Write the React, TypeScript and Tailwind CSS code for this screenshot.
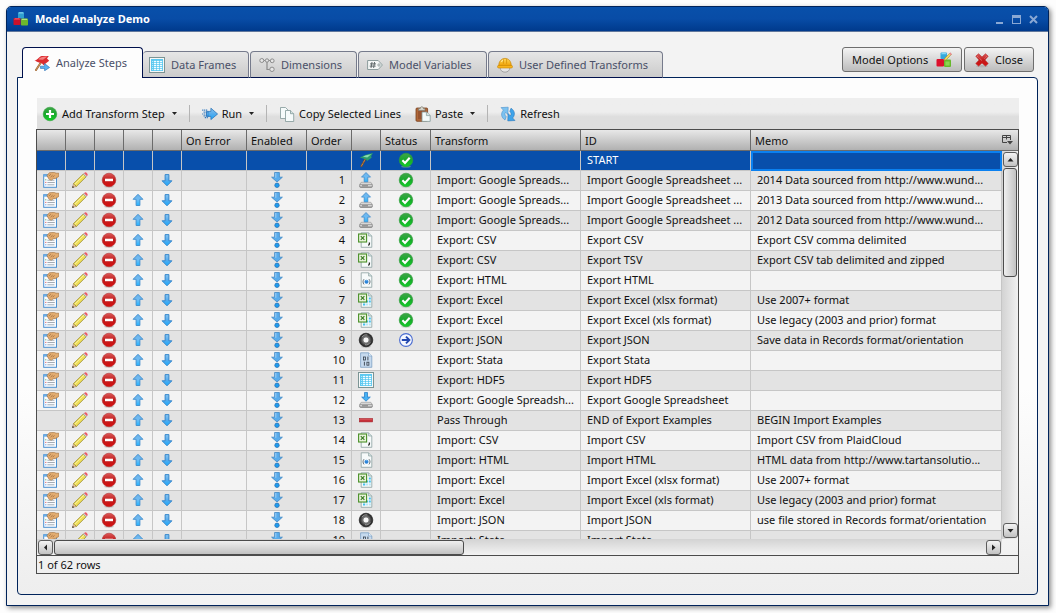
import type { ReactNode } from "react";

type IconProps = { className?: string };

function Svg({ children, className = "" }: IconProps & { children: ReactNode }) {
  return (
    <svg viewBox="0 0 16 16" aria-hidden="true" className={"block size-4 shrink-0 " + className}>
      {children}
    </svg>
  );
}

function Gradients() {
  return (
    <svg width="0" height="0" className="absolute" aria-hidden="true">
      <defs>
        <linearGradient id="gBlue" x1="0" y1="0" x2="0" y2="1">
          <stop offset="0" stopColor="#8ac6f2" />
          <stop offset="0.5" stopColor="#55abec" />
          <stop offset="1" stopColor="#18aaff" />
        </linearGradient>
        <linearGradient id="gBlueUp" x1="0" y1="0" x2="0" y2="1">
          <stop offset="0" stopColor="#6cb2ea" />
          <stop offset="0.5" stopColor="#6fbcf3" />
          <stop offset="1" stopColor="#22b4ff" />
        </linearGradient>
        <linearGradient id="gGreen" x1="0" y1="0" x2="0" y2="1">
          <stop offset="0" stopColor="#3fa548" />
          <stop offset="0.5" stopColor="#18a92c" />
          <stop offset="1" stopColor="#12d026" />
        </linearGradient>
        <linearGradient id="gRed" x1="0" y1="0" x2="0" y2="1">
          <stop offset="0" stopColor="#dd5a5a" />
          <stop offset="0.5" stopColor="#c01c1c" />
          <stop offset="1" stopColor="#d80f0f" />
        </linearGradient>
        <linearGradient id="gGray" x1="0" y1="0" x2="0" y2="1">
          <stop offset="0" stopColor="#f4f4f4" />
          <stop offset="1" stopColor="#9b9b9b" />
        </linearGradient>
        <linearGradient id="gHat" x1="0" y1="0" x2="0" y2="1">
          <stop offset="0" stopColor="#ffd75a" />
          <stop offset="1" stopColor="#f0a000" />
        </linearGradient>
        <radialGradient id="gRing">
          <stop offset="0.3" stopColor="#fff" />
          <stop offset="0.4" stopColor="#888" />
          <stop offset="0.7" stopColor="#4a4a4a" />
          <stop offset="1" stopColor="#1c1c1c" />
        </radialGradient>
      </defs>
    </svg>
  );
}

const CubesIcon = () => (
  <Svg>
    <rect x="5" y="1" width="6" height="6.5" rx="0.8" fill="#2f9fd0" />
    <path d="M5.4 2.6L6.3 1.2h3.6l.8 1.4z" fill="#7fd0ee" />
    <rect x="0.5" y="7" width="7" height="7" rx="0.8" fill="#c8102a" />
    <path d="M.9 8.6L2 7.2h4.2l.9 1.4z" fill="#ef5c6c" />
    <rect x="8" y="7.5" width="7" height="7" rx="0.8" fill="#6cb82e" />
    <path d="M8.4 9.1l1-1.4h4.3l.9 1.4z" fill="#b0e27c" />
  </Svg>
);

const CubesPencilIcon = () => (
  <Svg>
    <rect x="4.5" y="0.5" width="6.5" height="6.5" rx="1" fill="#35a8dc" />
    <path d="M5 2.2l1-1.4h3.6l1 1.4z" fill="#84d6f4" />
    <rect x="0.5" y="7" width="7.5" height="7.5" rx="1" fill="#dd0f2c" />
    <rect x="8" y="7.5" width="7" height="7.5" rx="1" fill="#67b82c" />
    <rect x="9.4" y="9.5" width="4.2" height="4" fill="#8cd450" />
    <path d="M8 8.6l.9-2.5L14 .9l1.5 1.4-5.1 5.4z" fill="#f1dc62" stroke="#8a7a28" strokeWidth=".5" />
    <path d="M13.2 1.7L14.3.6l1.5 1.4-1.1 1.2z" fill="#ee8a94" />
  </Svg>
);

const RedFlagIcon = () => (
  <Svg>
    <path d="M8.8 4.5L2 15" stroke="#9c6230" strokeWidth="2" strokeLinecap="round" />
    <path d="M8.8 4.5L2 15" stroke="#dba368" strokeWidth=".8" strokeLinecap="round" />
    <path d="M.5 5.2C3 5.8 4 2.6 7.5 1L14.8.9 13 3.4l2.2 2.4-5.8 4.5C8.8 7.3 4.6 8.2.5 5.2z" fill="#dc2c30" />
    <path d="M4.5 4.5C6 2.5 8 1.7 13.4 1.6L9 4.8z" fill="#f28080" />
    <path d="M6.4 11.2h4.2V8.6l5 3.9-5 3.3v-2.4H6.4z" fill="#5ab0f0" stroke="#2468b0" strokeWidth=".6" />
  </Svg>
);

const GreenFlagIcon = () => (
  <Svg className="mx-auto">
    <path d="M8.5 5L3 14.8" stroke="#7c4a20" strokeWidth="1.8" />
    <path d="M8.5 5L3 14.8" stroke="#e0b078" strokeWidth=".8" strokeDasharray="1 .6" />
    <path d="M1.4 5.2C4.5 5 5.4 3 9 2.4l5.9-1.3-1.7 3 .4 1.6-4.5 3.4C8.6 6.6 5 6.9 1.4 5.2z" fill="#2c9c6c" />
    <path d="M5 4.8c2-1.4 3.5-1.7 8.5-2.8L9.3 5.6z" fill="#8adcb0" />
  </Svg>
);

const TableIcon = ({ className }: IconProps) => (
  <Svg className={className}>
    <rect x="0.5" y="0.5" width="15" height="15" fill="#f6f8f8" stroke="#7c9494" />
    <rect x="2" y="2" width="12" height="12" fill="#5cc8f0" />
    <path d="M5 4h2v1H5zM8 4h2v1H8zM11 4h2v1h-2zM5 6h2v1H5zM8 6h2v1H8zM11 6h2v1h-2zM5 8h2v1H5zM8 8h2v1H8zM11 8h2v1h-2zM5 10h2v1H5zM8 10h2v1H8zM11 10h2v1h-2zM5 12h2v1H5zM8 12h2v1H8zM11 12h2v1h-2z" fill="#f2fcff" stroke="#f2fcff" strokeWidth=".3" />
    <path d="M3 4h1v1H3zM3 6h1v1H3zM3 8h1v1H3zM3 10h1v1H3zM3 12h1v1H3z" fill="#b4e8fa" />
  </Svg>
);

const DimensionsIcon = () => (
  <Svg>
    <path d="M4.5 3.5H12M8 3.5v9h4" stroke="#8c8c8c" strokeWidth="1.2" fill="none" />
    <circle cx="2.8" cy="3.5" r="2" fill="#e6e6e6" stroke="#8c8c8c" />
    <circle cx="8" cy="3.5" r="1.7" fill="#e6e6e6" stroke="#8c8c8c" />
    <circle cx="13.2" cy="3.8" r="1.9" fill="#e6e6e6" stroke="#8c8c8c" />
    <circle cx="13" cy="12.3" r="2.2" fill="#e6e6e6" stroke="#8c8c8c" />
  </Svg>
);

const TagIcon = () => (
  <Svg>
    <path d="M.6 3.5h10.6L15.4 8l-4.2 4.5H.6z" fill="#f4f7f6" stroke="#8c9c9c" />
    <path d="M5 5l-1 6M7.6 5l-1 6M3 6.9h6M2.7 9.1h6" stroke="#555f60" strokeWidth=".9" />
    <circle cx="12" cy="8" r="1.2" fill="#e3e3e3" stroke="#8c9c9c" strokeWidth=".8" />
  </Svg>
);

const HardHatIcon = () => (
  <Svg>
    <path d="M3 10c0 3.4 2.3 5.2 5 5.2s5-1.8 5-5.2" fill="#e4e4e4" stroke="#a3a3a3" />
    <path d="M1.8 9C1.6 4.6 4.2 1.4 8 1.4S14.4 4.6 14.2 9z" fill="url(#gHat)" stroke="#c88400" strokeWidth=".7" />
    <path d="M6.4 1.8v5M9.6 1.8v5" stroke="#d08c00" strokeWidth=".7" />
    <rect x="0.5" y="8.4" width="15" height="2.6" rx="1.2" fill="#f8b41c" stroke="#c88400" strokeWidth=".6" />
    <path d="M4.5 5c.4-1 1-1.7 1.7-2.1" stroke="#fff3bd" strokeWidth=".9" fill="none" />
  </Svg>
);

const CloseXIcon = () => (
  <Svg>
    <ellipse cx="8" cy="14.2" rx="6" ry="1.2" fill="#b3b3b3" />
    <path d="M1.8 4.2L4.6 1.8 8 5.1l3.5-3.3 2.7 2.4L10.9 8l3.3 3.6-2.7 2.5L8 10.9l-3.4 3.2-2.8-2.5L5.1 8z" fill="url(#gRed)" stroke="#b42020" strokeWidth=".6" />
    <path d="M3.4 4.4L8 8.6M12.6 4.4L10 7" stroke="#f0a0a0" strokeWidth=".8" strokeDasharray="1 .8" />
  </Svg>
);

const AddIcon = () => (
  <Svg>
    <circle cx="8" cy="8" r="6.8" fill="url(#gGreen)" stroke="#31a03c" strokeWidth=".6" />
    <path d="M8 4v8M4 8h8" stroke="#fff" strokeWidth="2.2" />
  </Svg>
);

const RunIcon = () => (
  <Svg>
    <path d="M4.5 5.4h4.4V2.2L15.6 8l-6.7 5.6v-3.2H4.5z" fill="url(#gBlue)" stroke="#2c74b8" strokeWidth=".8" />
    <path d="M.2 4.2h5M1.6 6.1h5M.2 8h6.4M1.6 9.9h5M2.8 11.6h3" stroke="#2c76bc" strokeWidth="1.2" strokeDasharray="1.2 .7" />
  </Svg>
);

const CopyIcon = () => (
  <Svg>
    <path d="M1.5 1.5h5l3 3v8h-8z" fill="#f5fafa" stroke="#829898" strokeWidth=".8" />
    <path d="M6.5 4.5h5l3.2 3.2v7.8H6.5z" fill="#f5fafa" stroke="#829898" strokeWidth=".8" />
    <path d="M11.5 4.5v3.2h3.2" fill="#d7e6e4" stroke="#829898" strokeWidth=".8" />
  </Svg>
);

const PasteIcon = () => (
  <Svg>
    <rect x="1" y="2" width="11.6" height="13.3" rx="1" fill="#b0683a" stroke="#7a3f1c" strokeWidth=".8" />
    <rect x="3" y="4.5" width="7.6" height="8.6" fill="#985430" />
    <path d="M3.6 4.4V2.6h1.6C5.2.2 8.4.2 8.4 2.6H10v1.8z" fill="#d8d8d0" stroke="#77776c" strokeWidth=".7" />
    <path d="M7 6h4.4l3.8 3.4v6H7z" fill="#f3fafa" stroke="#829898" strokeWidth=".8" />
    <path d="M11.4 6v3.6h3.8" fill="#d3e2e0" stroke="#829898" strokeWidth=".7" />
  </Svg>
);

const RefreshIcon = () => (
  <Svg>
    <path d="M1 1.6l7.2-.4-.3 7.4-2.2-2.3c-1.2 1.2-1 3 .5 4.4L5 14C.9 11.4.7 7 3.4 4.1z" fill="#7cc2f0" stroke="#4a90cc" strokeWidth=".6" />
    <path d="M15 14.5l-7.2.4.3-7.4 2.2 2.3c1.2-1.2 1-3-.5-4.4L11 2.2c4.1 2.6 4.3 6.9 1.6 9.8z" fill="#3fa4ea" stroke="#2c78bc" strokeWidth=".6" />
  </Svg>
);

const PropertiesIcon = () => (
  <Svg className="mx-auto">
    <rect x="0.7" y="2.7" width="12.8" height="12.6" fill="#fafcff" stroke="#4a90d0" />
    <path d="M.7 2.7h8v2h-8z" fill="#6ab0ea" />
    <path d="M4.4 8.2h7M4.4 10.5h7.4M4.4 12.8h7" stroke="#9aa4ae" strokeWidth=".9" />
    <path d="M2.3 7.8h1" stroke="#46b446" />
    <path d="M2.3 10.4h1" stroke="#d44" />
    <path d="M2.3 12.8h1" stroke="#4680e0" />
    <path d="M4 3.6L6.4.7l5-.3 1.6.8h2.8V4.4l-3.5 2.3-1.6-.3-2.2 1.7-1.6-.3-1.4-1.4z" fill="#e2ac70" stroke="#a06c38" strokeWidth=".6" />
    <path d="M6.2 3.8l1.6-1.5M7.6 5.1l2-1.9M9.6 5.2l1.8-1.8" stroke="#9a6030" strokeWidth=".7" />
  </Svg>
);

const PencilIcon = () => (
  <Svg className="mx-auto">
    <path d="M.3 15.7l1.2-4.1 2.9 2.8z" fill="#e9c79a" stroke="#806040" strokeWidth=".4" />
    <path d="M.2 15.8l.6-1.9 1.3 1.3z" fill="#111" />
    <path d="M1.5 11.6L11.3 2l2.8 2.8-9.7 9.6z" fill="#f0e05a" stroke="#8c7c20" strokeWidth=".7" />
    <path d="M2.7 12.2l9.6-9.4" stroke="#fbf6b0" strokeWidth=".8" />
    <path d="M11.3 2l.8-.8 2.8 2.8-.8.8z" fill="#d5dbe0" stroke="#8a929a" strokeWidth=".4" />
    <path d="M12.1 1.2c1-1.3 2-1 2.9 0s1 1.9-.1 2.8z" fill="#ee5a68" />
  </Svg>
);

const RemoveIcon = () => (
  <Svg className="mx-auto">
    <ellipse cx="8" cy="14.8" rx="5" ry=".8" fill="#bdbdbd" />
    <circle cx="8" cy="8" r="6.8" fill="url(#gRed)" stroke="#b03030" strokeWidth=".6" />
    <rect x="4" y="6.7" width="8" height="2.5" fill="#fff" />
  </Svg>
);

const UpIcon = () => (
  <Svg className="mx-auto">
    <path d="M8 2.3l4.9 5H9.9v6.2H6.1V7.3h-3z" fill="url(#gBlueUp)" stroke="#3f8ccc" strokeWidth=".9" />
  </Svg>
);

const DownIcon = () => (
  <Svg className="mx-auto">
    <path d="M8 13.8l-4.9-5h3V2.6h3.8v6.2h3z" fill="url(#gBlue)" stroke="#2c80c8" strokeWidth=".9" />
  </Svg>
);

const EnabledIcon = () => (
  <Svg className="mx-auto">
    <path d="M8 10L2.6 5.2h3V.5h4.8v4.7h3z" fill="#58acec" stroke="#4088c4" strokeWidth=".8" />
    <path d="M6.8 1v4.8" stroke="#a4d4f8" strokeWidth=".9" />
    <circle cx="8" cy="13.3" r="2.2" fill="#1c9cf0" stroke="#2c74b4" strokeWidth=".8" />
  </Svg>
);

const OkIcon = () => (
  <Svg className="mx-auto">
    <ellipse cx="8" cy="14.8" rx="5" ry=".8" fill="#9fbf9f" opacity=".6" />
    <circle cx="8" cy="8" r="6.8" fill="url(#gGreen)" stroke="#2f9a3a" strokeWidth=".6" />
    <path d="M4.4 8.2l2.6 2.7 4.7-5.1" stroke="#fff" strokeWidth="2.1" fill="none" />
  </Svg>
);

const RunningIcon = () => (
  <Svg className="mx-auto">
    <circle cx="8" cy="8" r="6.4" fill="#f6f8ff" stroke="#4a6cd0" strokeWidth="1.1" />
    <path d="M3.8 8h6.4M8 4.6L11.4 8 8 11.4" stroke="#2448b0" strokeWidth="1.9" fill="none" />
  </Svg>
);

const Drive = () => (
  <>
    <path d="M3.2 10.3h9.6l1.6 2.3H1.6z" fill="#e8e8e8" stroke="#8a8a8a" strokeWidth=".6" />
    <rect x="1.6" y="12.3" width="12.8" height="3.1" rx="1.2" fill="url(#gGray)" stroke="#777" strokeWidth=".7" />
    <path d="M4 13.8h6" stroke="#666" strokeWidth=".8" />
  </>
);

const UploadIcon = () => (
  <Svg className="mx-auto">
    <Drive />
    <path d="M8 .5l4.5 4.6H9.8v4.7H6.2V5.1H3.5z" fill="url(#gBlueUp)" stroke="#3f8ccc" strokeWidth=".8" />
  </Svg>
);

const DownloadIcon = () => (
  <Svg className="mx-auto">
    <Drive />
    <path d="M8 9.2L3.7 5.1h2.8V.5h3v4.6h2.8z" fill="#46b2f4" stroke="#2c80c8" strokeWidth=".8" />
  </Svg>
);

const Page = () => (
  <>
    <path d="M3.2.8h7.4l3.2 3.2v11.3H3.2z" fill="#f6fafa" stroke="#8aa0a0" strokeWidth=".8" />
    <path d="M10.6.8V4h3.2" fill="#d5e4e2" stroke="#8aa0a0" strokeWidth=".7" />
  </>
);

const ExcelBadge = () => (
  <>
    <rect x=".6" y="2" width="8" height="8" fill="#eaf4dc" stroke="#4a9028" strokeWidth="1.1" />
    <path d="M2.8 4.1l3.6 3.8M6.4 4.1L2.8 7.9" stroke="#3c7c28" strokeWidth="1.2" />
  </>
);

const CsvIcon = () => (
  <Svg className="mx-auto">
    <Page />
    <ExcelBadge />
    <path d="M11.4 10.4v1.3c0 .8-.4 1.3-1.1 1.6" stroke="#222" strokeWidth="1.3" fill="none" />
  </Svg>
);

const ExcelIcon = () => (
  <Svg className="mx-auto">
    <Page />
    <path d="M5 8.4h2.2v2H5zM8 8.4h2v2H8zM5 11.4h2.2v2H5zM10.8 8.4h2v2h-2zM10.8 5.4h2v2h-2z" fill="#48c0ee" />
    <path d="M8 11.4h2v2H8zM10.8 11.4h2v2h-2z" fill="#b8e6f6" />
    <ExcelBadge />
  </Svg>
);

const HtmlIcon = () => (
  <Svg className="mx-auto">
    <Page />
    <path d="M6 7.2c-1.3 1.6-1.3 3.6 0 5.2M11 7.2c1.3 1.6 1.3 3.6 0 5.2" stroke="#555f66" strokeWidth=".9" fill="none" />
    <circle cx="8.5" cy="9.8" r="2" fill="#2c84d8" />
    <path d="M7.6 9c.4-.8 1.3-.9 1.8-.4" stroke="#a9d8ff" strokeWidth=".6" fill="none" />
  </Svg>
);

const JsonIcon = () => (
  <Svg className="mx-auto">
    <ellipse cx="8" cy="14.8" rx="5" ry=".8" fill="#b5b5b5" />
    <circle cx="8" cy="8" r="6.8" fill="url(#gRing)" stroke="#222" strokeWidth=".7" />
    <path d="M4 5.2c1.3-2 3.2-2.8 5.4-2.2M12.2 10.4c-1.3 2-3 2.8-5.2 2.3" stroke="#a0a0a0" strokeWidth=".9" fill="none" />
    <circle cx="8" cy="8" r="2.3" fill="#f7f7f7" />
  </Svg>
);

const BinaryIcon = () => (
  <Svg className="mx-auto">
    <path d="M2.6.8h8l3.2 3.2v11.3H2.6z" fill="#c6daee" stroke="#7ca0c4" strokeWidth=".8" />
    <path d="M10.6.8V4h3.2" fill="#edf5fc" stroke="#7ca0c4" strokeWidth=".7" />
    <rect x="5.4" y="5" width="2" height="3" fill="none" stroke="#333d48" strokeWidth=".8" />
    <path d="M9.9 4.6v3.8M6.4 9.8v3.8" stroke="#333d48" strokeWidth=".9" />
    <rect x="8.9" y="10.2" width="2" height="3" fill="none" stroke="#333d48" strokeWidth=".8" />
  </Svg>
);

const BarIcon = () => (
  <Svg className="mx-auto">
    <rect x="1.4" y="6.5" width="13.2" height="3.4" fill="#c83038" stroke="#a02028" strokeWidth=".6" />
    <path d="M1.8 7.2h12.4" stroke="#e27a7e" strokeWidth=".6" />
  </Svg>
);

const CenteredTableIcon = () => <TableIcon className="mx-auto" />;

type Kind = "upload" | "download" | "csv" | "html" | "excel" | "json" | "binary" | "table" | "bar";

const kindIcons: Record<Kind, () => ReactNode> = {
  upload: UploadIcon,
  download: DownloadIcon,
  csv: CsvIcon,
  html: HtmlIcon,
  excel: ExcelIcon,
  json: JsonIcon,
  binary: BinaryIcon,
  table: CenteredTableIcon,
  bar: BarIcon,
};

type Step = {
  order: number;
  kind: Kind;
  status?: "ok" | "running";
  transform: string;
  id: string;
  memo?: string;
};

const steps: Step[] = [
  { order: 1, kind: "upload", status: "ok", transform: "Import: Google Spreads...", id: "Import Google Spreadsheet ...", memo: "2014 Data sourced from http://www.wund..." },
  { order: 2, kind: "upload", status: "ok", transform: "Import: Google Spreads...", id: "Import Google Spreadsheet ...", memo: "2013 Data sourced from http://www.wund..." },
  { order: 3, kind: "upload", status: "ok", transform: "Import: Google Spreads...", id: "Import Google Spreadsheet ...", memo: "2012 Data sourced from http://www.wund..." },
  { order: 4, kind: "csv", status: "ok", transform: "Export: CSV", id: "Export CSV", memo: "Export CSV comma delimited" },
  { order: 5, kind: "csv", status: "ok", transform: "Export: CSV", id: "Export TSV", memo: "Export CSV tab delimited and zipped" },
  { order: 6, kind: "html", status: "ok", transform: "Export: HTML", id: "Export HTML" },
  { order: 7, kind: "excel", status: "ok", transform: "Export: Excel", id: "Export Excel (xlsx format)", memo: "Use 2007+ format" },
  { order: 8, kind: "excel", status: "ok", transform: "Export: Excel", id: "Export Excel (xls format)", memo: "Use legacy (2003 and prior) format" },
  { order: 9, kind: "json", status: "running", transform: "Export: JSON", id: "Export JSON", memo: "Save data in Records format/orientation" },
  { order: 10, kind: "binary", transform: "Export: Stata", id: "Export Stata" },
  { order: 11, kind: "table", transform: "Export: HDF5", id: "Export HDF5" },
  { order: 12, kind: "download", transform: "Export: Google Spreadsh...", id: "Export Google Spreadsheet" },
  { order: 13, kind: "bar", transform: "Pass Through", id: "END of Export Examples", memo: "BEGIN Import Examples" },
  { order: 14, kind: "csv", transform: "Import: CSV", id: "Import CSV", memo: "Import CSV from PlaidCloud" },
  { order: 15, kind: "html", transform: "Import: HTML", id: "Import HTML", memo: "HTML data from http://www.tartansolutio..." },
  { order: 16, kind: "excel", transform: "Import: Excel", id: "Import Excel (xlsx format)", memo: "Use 2007+ format" },
  { order: 17, kind: "excel", transform: "Import: Excel", id: "Import Excel (xls format)", memo: "Use legacy (2003 and prior) format" },
  { order: 18, kind: "json", transform: "Import: JSON", id: "Import JSON", memo: "use file stored in Records format/orientation" },
  { order: 19, kind: "binary", transform: "Import: Stata", id: "Import Stata" },
];

const headings = ["", "", "", "", "", "On Error", "Enabled", "Order", "", "Status", "Transform", "ID", "Memo"];

const cell = "h-5 overflow-hidden border-r border-b border-[#c6c6c6] p-0 pt-px align-top whitespace-nowrap";
const textCell = cell + " pl-1.5";

function RowAction({ label, children }: { label: string; children: ReactNode }) {
  return (
    <button type="button" aria-label={label} className="block w-full">
      {children}
    </button>
  );
}

function StepRow({ step }: { step: Step }) {
  const Kind = kindIcons[step.kind];
  return (
    <tr className="odd:bg-[#f3f3f3] even:bg-[#e3e3e3]">
      <td className={cell}>{step.kind !== "bar" && <RowAction label="Properties"><PropertiesIcon /></RowAction>}</td>
      <td className={cell}><RowAction label="Edit"><PencilIcon /></RowAction></td>
      <td className={cell}><RowAction label="Remove"><RemoveIcon /></RowAction></td>
      <td className={cell}>{step.order > 1 && <RowAction label="Move up"><UpIcon /></RowAction>}</td>
      <td className={cell}><RowAction label="Move down"><DownIcon /></RowAction></td>
      <td className={cell} />
      <td className={cell}><EnabledIcon /></td>
      <td className={cell + " pr-1.5 text-right"}>{step.order}</td>
      <td className={cell}><Kind /></td>
      <td className={cell}>
        {step.status === "ok" && <OkIcon />}
        {step.status === "running" && <RunningIcon />}
      </td>
      <td className={textCell}>{step.transform}</td>
      <td className={textCell}>{step.id}</td>
      <td className={textCell}>{step.memo}</td>
    </tr>
  );
}

function StepsTable() {
  return (
    <table className="w-full table-fixed border-separate border-spacing-0 text-left">
      <colgroup>
        <col className="w-[29px]" />
        <col className="w-[29px]" />
        <col className="w-[29px]" />
        <col className="w-[29px]" />
        <col className="w-[29px]" />
        <col className="w-[65px]" />
        <col className="w-[60px]" />
        <col className="w-[45px]" />
        <col className="w-[29px]" />
        <col className="w-[50px]" />
        <col className="w-[150px]" />
        <col className="w-[170px]" />
        <col />
      </colgroup>
      <thead>
        <tr>
          {headings.map((h, i) => (
            <th
              key={i}
              className="h-[21px] border-r border-b border-[#6b6b6b] bg-linear-to-b from-[#e8e8e8] to-[#b1b1b1] p-0 pt-0.5 pl-1 font-normal last:border-r-0"
            >
              {h}
            </th>
          ))}
        </tr>
      </thead>
      <tbody>
        <tr className="bg-[#084fab] text-white">
          {headings.slice(0, 8).map((_, i) => (
            <td key={i} className={cell} />
          ))}
          <td className={cell}><GreenFlagIcon /></td>
          <td className={cell}><OkIcon /></td>
          <td className={cell} />
          <td className={textCell}>START</td>
          <td className={cell + " outline-2 -outline-offset-2 outline-[#0a80f0]"} />
        </tr>
        {steps.map((s) => (
          <StepRow key={s.order} step={s} />
        ))}
      </tbody>
    </table>
  );
}

function ScrollButton({ label, d }: { label: string; d: string }) {
  return (
    <button
      type="button"
      aria-label={label}
      className="flex size-[15px] shrink-0 items-center justify-center rounded-[3px] border border-[#5c5c5c] bg-linear-to-b from-[#f4f4f4] to-[#c2c2c2]"
    >
      <svg viewBox="0 0 7 7" className="size-[7px]" aria-hidden="true">
        <path d={d} fill="#222" />
      </svg>
    </button>
  );
}

const tabs = [
  { label: "Data Frames", icon: <TableIcon />, width: "w-[106px]" },
  { label: "Dimensions", icon: <DimensionsIcon />, width: "w-[107px]" },
  { label: "Model Variables", icon: <TagIcon />, width: "w-[129px]" },
  { label: "User Defined Transforms", icon: <HardHatIcon />, width: "w-[175px]" },
];

function Caret() {
  return (
    <svg viewBox="0 0 5 3" className="ml-[7px] h-[3px] w-[5px]" aria-hidden="true">
      <path d="M0 0h5L2.5 3z" fill="#222" />
    </svg>
  );
}

function ToolButton({ icon, label, menu }: { icon: ReactNode; label: string; menu?: boolean }) {
  return (
    <button type="button" className="flex items-center whitespace-nowrap">
      {icon}
      <span className="ml-1">{label}</span>
      {menu && <Caret />}
    </button>
  );
}

const Divider = () => <span className="mx-3 h-[17px] w-px bg-[#b4b4b4]" />;

const dialogButton =
  "flex h-[25px] items-center rounded-[3px] border border-[#6e6e6e] bg-linear-to-b from-[#f4f4f4] to-[#bcbcbc] whitespace-nowrap";

export default function App() {
  return (
    <main className="flex h-screen flex-col bg-[#fdfdfd] pt-1.5 pr-[7px] pb-[7px] pl-1.5 font-['Noto_Sans','Open_Sans',sans-serif] text-[11px] leading-4 text-[#111111]">
      <Gradients />
      <section className="flex min-h-0 flex-1 flex-col rounded-t-[5px] border border-[#00235a] bg-[#f3f3f3] shadow-[2px_2px_5px_rgba(0,0,0,0.45)]">
        <header className="flex h-[25px] shrink-0 items-center rounded-t-[4px] border-b border-[#60779c] bg-linear-to-b from-[#0850aa] via-[#084ca6] to-[#003a8c] pr-2.5 pl-1.5 text-white">
          <CubesIcon />
          <h1 className="ml-1.5 flex-1 font-bold">Model Analyze Demo</h1>
          <div className="flex gap-2 text-[#8aa8d4]">
            <button type="button" aria-label="Minimize">
              <svg viewBox="0 0 9 9" className="size-[9px]"><path d="M1 7h7v2H1z" fill="currentColor" /></svg>
            </button>
            <button type="button" aria-label="Maximize">
              <svg viewBox="0 0 9 9" className="size-[9px]"><path d="M0 0h9v9H0zM1 3v5h7V3z" fill="currentColor" fillRule="evenodd" /></svg>
            </button>
            <button type="button" aria-label="Close window">
              <svg viewBox="0 0 9 9" className="size-[9px]"><path d="M1 1l7 7M8 1L1 8" stroke="currentColor" strokeWidth="2" /></svg>
            </button>
          </div>
        </header>

        <div className="flex min-h-0 flex-1 flex-col px-2.5 pt-[15px] pb-2.5">
          <div className="flex shrink-0 justify-between pr-1 pl-[5px]">
            <div role="tablist" className="z-10 -mb-px flex items-end text-[#4a5068]">
              <button
                type="button"
                role="tab"
                aria-selected="true"
                className="flex h-[31px] w-[121px] items-center rounded-t-[4px] border border-b-0 border-[#00104c] bg-[#fdfdfd] pl-[11px] whitespace-nowrap"
              >
                <RedFlagIcon />
                <span className="ml-1.5">Analyze Steps</span>
              </button>
              <div className="flex gap-px">
                {tabs.map((t) => (
                  <button
                    key={t.label}
                    type="button"
                    role="tab"
                    aria-selected="false"
                    className={
                      "flex h-[27px] items-center rounded-t-[4px] border border-b-[#00104c] border-[#767b8c] bg-linear-to-b from-[#e6e6e6] to-[#cbcbcb] pl-2 whitespace-nowrap first:border-l-0 first:pl-1.5 " +
                      t.width
                    }
                  >
                    {t.icon}
                    <span className="ml-1.5">{t.label}</span>
                  </button>
                ))}
              </div>
            </div>
            <div className="flex gap-0.5">
              <button type="button" className={dialogButton + " w-[120px] justify-between px-[9px]"}>
                Model Options
                <CubesPencilIcon />
              </button>
              <button type="button" className={dialogButton + " w-[70px] gap-[5px] pl-[9px]"}>
                <CloseXIcon />
                Close
              </button>
            </div>
          </div>

          <div
            role="tabpanel"
            className="flex min-h-0 flex-1 flex-col rounded-[4px] rounded-tl-none border border-[#00235a] bg-linear-to-b from-[#fdfdfd] from-60% to-[#eeeeee] px-[18px] pt-5 pb-5"
          >
            <div role="toolbar" className="ml-px flex h-[31px] shrink-0 items-center bg-linear-to-b from-[#eeeeee] from-45% to-[#dedede] to-60% pl-[5px]">
              <ToolButton icon={<AddIcon />} label="Add Transform Step" menu />
              <Divider />
              <ToolButton icon={<RunIcon />} label="Run" menu />
              <Divider />
              <ToolButton icon={<CopyIcon />} label="Copy Selected Lines" />
              <span className="w-3.5" />
              <ToolButton icon={<PasteIcon />} label="Paste" menu />
              <Divider />
              <ToolButton icon={<RefreshIcon />} label="Refresh" />
            </div>

            <div className="flex min-h-0 flex-1 flex-col border border-[#4c4c4c]">
              <div className="flex min-h-0 flex-1">
                <div className="min-w-0 flex-1 overflow-hidden">
                  <StepsTable />
                </div>
                <div className="flex w-4 shrink-0 flex-col">
                  <button
                    type="button"
                    aria-label="Choose columns"
                    className="flex h-[21px] shrink-0 items-center border-b border-[#6b6b6b] bg-linear-to-b from-[#e8e8e8] to-[#b1b1b1]"
                  >
                    <svg viewBox="0 0 11 10" className="h-2.5 w-[11px]" aria-hidden="true">
                      <path d="M5 7.5H.5v-7h8V5M.5 2.5h8M4.5.5v4" stroke="#444" fill="none" />
                      <path d="M5 6h6L8 9.5z" fill="#444" />
                    </svg>
                  </button>
                  <div className="flex min-h-0 flex-1 flex-col items-center bg-linear-to-r from-[#d3d3d3] to-[#f1f1f1] py-px">
                    <ScrollButton label="Scroll up" d="M3.5 2L6.5 5.5h-6z" />
                    <div className="mt-px h-[109px] w-3.5 rounded-[3px] border border-[#4c4c4c] bg-linear-to-r from-[#efefef] to-[#c2c2c2]" />
                    <div className="flex-1" />
                    <ScrollButton label="Scroll down" d="M3.5 5.5L.5 2h6z" />
                  </div>
                </div>
              </div>
              <div className="flex h-[17px] shrink-0 border-b border-[#4c4c4c] pr-4">
                <div className="flex flex-1 bg-linear-to-b from-[#d3d3d3] to-[#f3f3f3] px-px pt-px">
                  <ScrollButton label="Scroll left" d="M2 3.5L5 .5v6z" />
                  <div className="ml-px flex-1">
                    <div className="h-[15px] w-11/25 rounded-[3px] border border-[#4c4c4c] bg-linear-to-b from-[#efefef] to-[#c2c2c2]" />
                  </div>
                  <ScrollButton label="Scroll right" d="M5.5 3.5L2 .5v6z" />
                </div>
              </div>
              <p className="h-[17px] shrink-0 pt-px pl-px">1 of 62 rows</p>
            </div>
          </div>
        </div>
      </section>
    </main>
  );
}
